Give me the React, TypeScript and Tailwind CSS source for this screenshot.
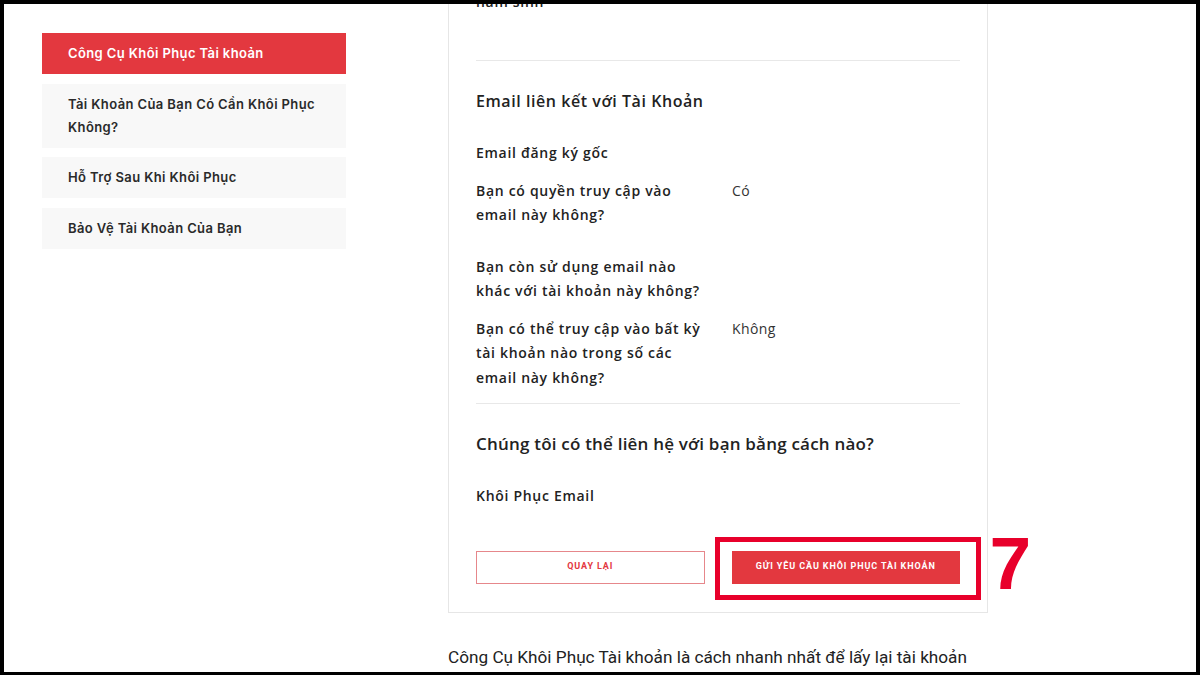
import React from "react";

const NAV = [
  { label: "Công Cụ Khôi Phục Tài khoản", active: true },
  { label: "Tài Khoản Của Bạn Có Cần Khôi Phục Không?", active: false },
  { label: "Hỗ Trợ Sau Khi Khôi Phục", active: false },
  { label: "Bảo Vệ Tài Khoản Của Bạn", active: false },
];

const body = { fontFamily: "'Open Sans', Lato, sans-serif" };

function Row({ q, a, className = "" }: { q: string[]; a?: string; className?: string }) {
  return (
    <div className={`flex text-[14px] leading-[24.5px] text-[#222] ${className}`}>
      <div className="w-[256px] font-semibold tracking-[0.05em]">
        {q.map((l) => (
          <div key={l}>{l}</div>
        ))}
      </div>
      {a && <div className="text-[#333] tracking-[0.03em]">{a}</div>}
    </div>
  );
}

export default function App() {
  return (
    <div className="w-[1200px] h-[675px] bg-white border-[4px] border-b-[3px] border-black box-border overflow-hidden">
      <div className="flex">
        {/* sidebar */}
        <div
          className="ml-[38px] mt-[29px] w-[304px] flex flex-col gap-[9.5px]"
          style={{ fontFamily: "Inter, sans-serif" }}
        >
          {NAV.map((n) => (
            <div
              key={n.label}
              className={`px-[26px] py-[9px] text-[13px] leading-[23px] font-semibold tracking-[0.03em] ${
                n.active ? "bg-[#e3383f] text-white" : "bg-[#f8f8f8] text-[#2a2a2a]"
              }`}
            >
              {n.label}
            </div>
          ))}
        </div>

        {/* main */}
        <div className="ml-[102px] w-[540px]" style={body}>
          <div className="border border-t-0 border-[#e6e6e6] px-[27px] pb-[28px]">
            <div className="-mt-[14px] text-[14px] leading-[24px] font-semibold tracking-[0.05em] text-[#222]">
              năm sinh
            </div>
            <div className="mt-[46px] border-t border-[#e8e8e8]" />

            <div className="mt-[28px] text-[16px] leading-[24px] font-semibold tracking-[0.035em] text-[#222]">
              Email liên kết với Tài Khoản
            </div>
            <Row className="mt-[28px]" q={["Email đăng ký gốc"]} />
            <Row className="mt-[13px]" q={["Bạn có quyền truy cập vào", "email này không?"]} a="Có" />
            <Row className="mt-[27px]" q={["Bạn còn sử dụng email nào", "khác với tài khoản này không?"]} />
            <Row
              className="mt-[13px]"
              q={["Bạn có thể truy cập vào bất kỳ", "tài khoản nào trong số các", "email này không?"]}
              a="Không"
            />
            <div className="mt-[13px] border-t border-[#e8e8e8]" />

            <div className="mt-[27px] text-[17px] leading-[26px] font-semibold tracking-[0.012em] text-[#222]">
              Chúng tôi có thể liên hệ với bạn bằng cách nào?
            </div>
            <Row className="mt-[27px]" q={["Khôi Phục Email"]} />

            <div className="mt-[42px] grid grid-cols-2 gap-[27px]" style={{ fontFamily: "Roboto, sans-serif" }}>
              <button className="h-[33px] border border-[#e6878b] text-[#e3383f] text-[9px] font-bold tracking-[0.1em]">
                QUAY LẠI
              </button>
              <div className="relative">
                <button className="w-full h-[33px] bg-[#e3383f] text-white text-[9px] font-bold tracking-[0.1em]">
                  GỬI YÊU CẦU KHÔI PHỤC TÀI KHOẢN
                </button>
                {/* annotation */}
                <div className="absolute -left-[17px] -top-[14px] w-[266px] h-[63px] border-[5px] border-[#e8002b]" />
                <div
                  className="absolute left-[258px] -top-[25px] text-[75px] leading-none font-bold text-[#e8002b]"
                  style={{ fontFamily: "'Liberation Sans', Arial, sans-serif" }}
                >
                  7
                </div>
              </div>
            </div>
          </div>

          <div
            className="mt-[32px] text-[17.2px] leading-[24px] text-[#222]"
            style={{ fontFamily: "Roboto, sans-serif" }}
          >
            Công Cụ Khôi Phục Tài khoản là cách nhanh nhất để lấy lại tài khoản
          </div>
        </div>
      </div>
    </div>
  );
}
